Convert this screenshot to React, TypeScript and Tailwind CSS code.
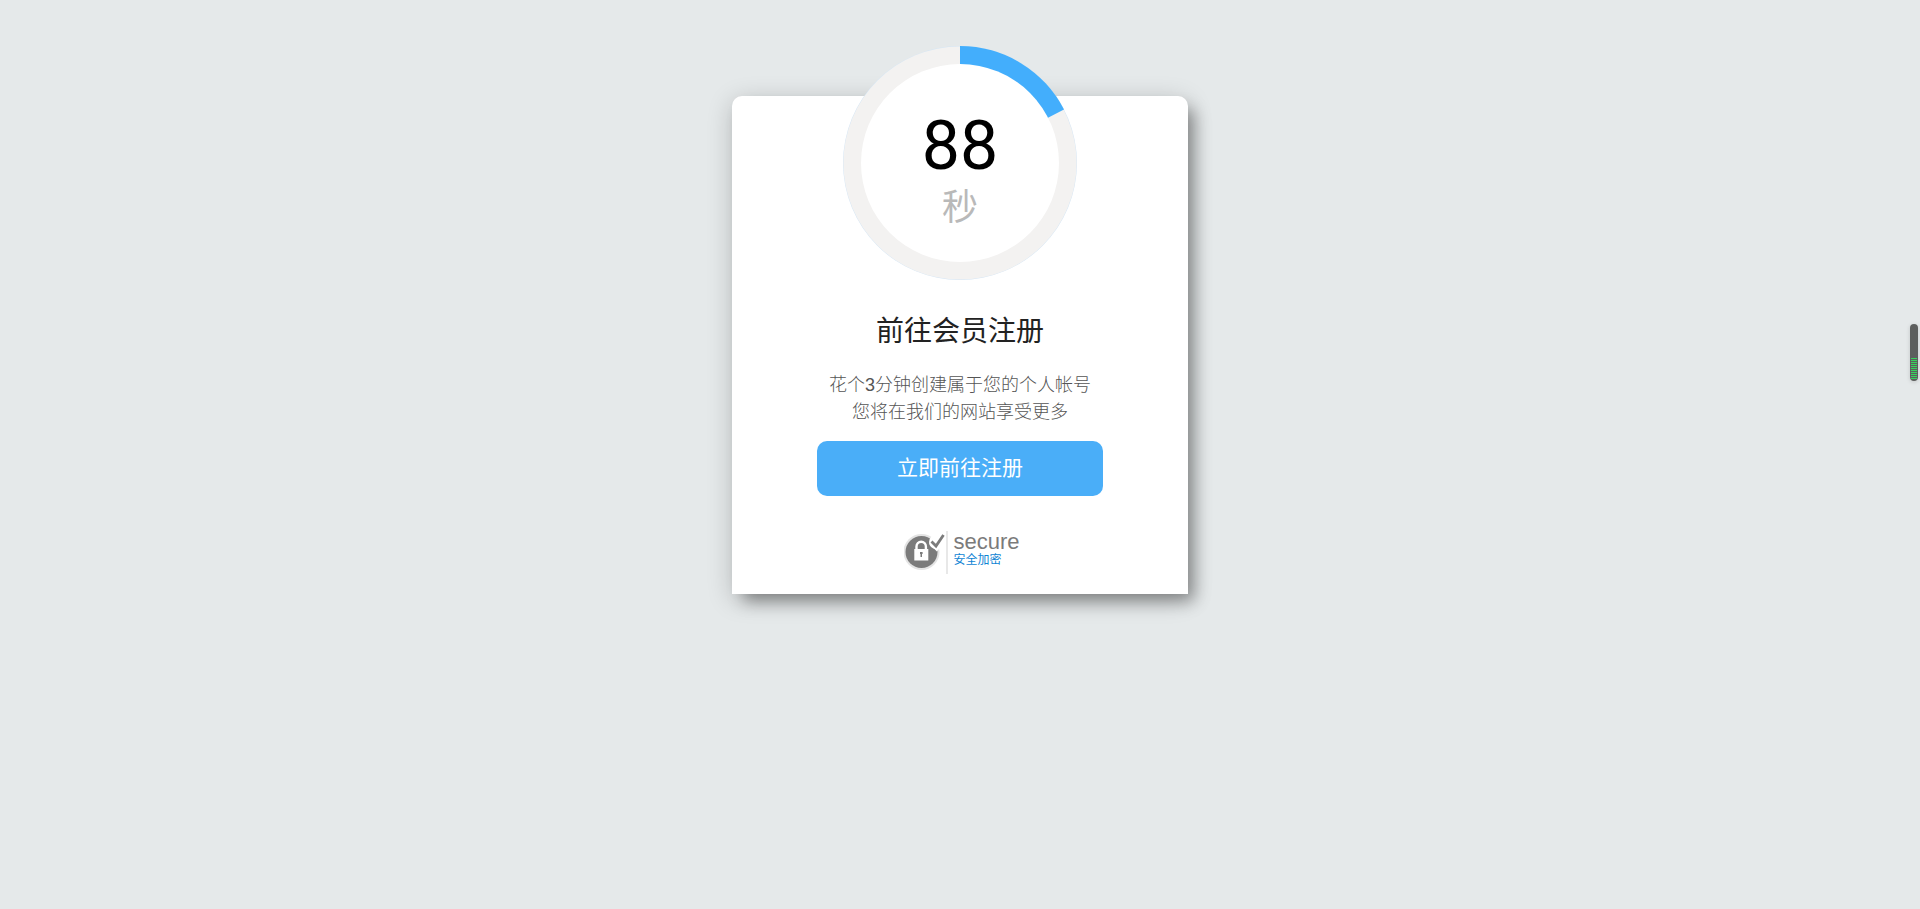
const TOTAL_TICKS = 11;

interface CountdownRingProps {
  seconds: number;
}

function CountdownRing({ seconds }: CountdownRingProps) {
  return (
    <div className="relative -mt-[50px] size-[234px]">
      <svg viewBox="0 0 234 234" className="block size-full" aria-hidden="true">
        <circle cx="117" cy="117" r="117" fill="#d5e6f5" />
        <circle cx="117" cy="117" r="116.6" fill="#f3f2f1" />
        <path d="M117 117V0A117 117 0 0 1 221 63.500Z" fill="#43aefc" />
        <circle cx="117" cy="117" r="99" fill="#fff" />
      </svg>
      <div className="absolute inset-0 flex flex-col items-center pt-[60px]">
        <span className="font-[Roboto,sans-serif] text-[68px] leading-[80px] text-black">{seconds}</span>
        <span className="text-4xl leading-[44px] text-[#b9b9b9]">秒</span>
      </div>
    </div>
  );
}

function SecureBadge() {
  return (
    <div className="mt-[34px] flex items-center pl-1">
      <svg viewBox="0 0 42 44" className="h-[44px] w-[42px]" aria-hidden="true">
        <circle cx="17.500" cy="22" r="18" fill="#e4e4e4" />
        <circle cx="17.500" cy="22" r="16" fill="#7b7b7b" />
        <circle cx="32" cy="12" r="7" fill="#fff" />
        <path d="M28 11l4.500 4.500 7.500-10" fill="none" stroke="#fff" strokeWidth="8" />
        <path d="M27.500 11.500l4.500 4.500 7.500-11" fill="none" stroke="#7b7b7b" strokeWidth="2.800" />
        <path d="M12.500 20v-3.500a4.700 4.700 0 0 1 9.400 0v3.500" fill="none" stroke="#fff" strokeWidth="2.400" />
        <rect x="10.300" y="19" width="14" height="11.500" fill="#fff" />
        <path d="M16 22h2.600v2h-.6v3h-1.500v-3h-.5z" fill="#7b7b7b" />
      </svg>
      <div className="flex h-[43px] flex-col border-l-2 border-[#e8e8e8] pl-[5px]">
        <span className="text-[22px] leading-[22px] text-[#7b7b7b]">secure</span>
        <span className="text-xs leading-[14px] text-[#0f84d4]">安全加密</span>
      </div>
    </div>
  );
}

function LevelMeter() {
  return (
    <div className="fixed top-[324px] right-[2px] flex h-[57px] w-2 flex-col items-center justify-end gap-px rounded-full bg-[#5c5e5d] pb-[2px] shadow-[0_1px_4px_rgba(0,0,0,0.15)]">
      {Array.from({ length: TOTAL_TICKS }, (_, i) => (
        <span key={i} className="h-px w-[6px] bg-[#35d45c]" />
      ))}
    </div>
  );
}

export default function App() {
  return (
    <div className="min-h-screen bg-[#e5e9ea] pt-24 font-['Liberation_Sans','Noto_Sans_CJK_SC',sans-serif]">
      <main className="mx-auto flex w-full max-w-[456px] flex-col items-center rounded-t-[10px] bg-white pb-[20px] shadow-[9px_10px_16px_-3px_rgba(0,0,0,0.35),0_5px_26px_rgba(0,0,0,0.2)]">
        <CountdownRing seconds={88} />
        <h1 className="mt-[31px] text-[28px] leading-[42px] text-[#222]">前往会员注册</h1>
        <p className="mt-[19px] text-center text-lg leading-[27px] font-light text-[#555]">
          花个3分钟创建属于您的个人帐号
          <br />
          您将在我们的网站享受更多
        </p>
        <button type="button" className="mt-[15px] h-[55px] w-[286px] cursor-pointer rounded-[10px] bg-[#4aaef8] pb-[2px] text-[21px] text-white">
          立即前往注册
        </button>
        <SecureBadge />
      </main>
      <LevelMeter />
    </div>
  );
}
